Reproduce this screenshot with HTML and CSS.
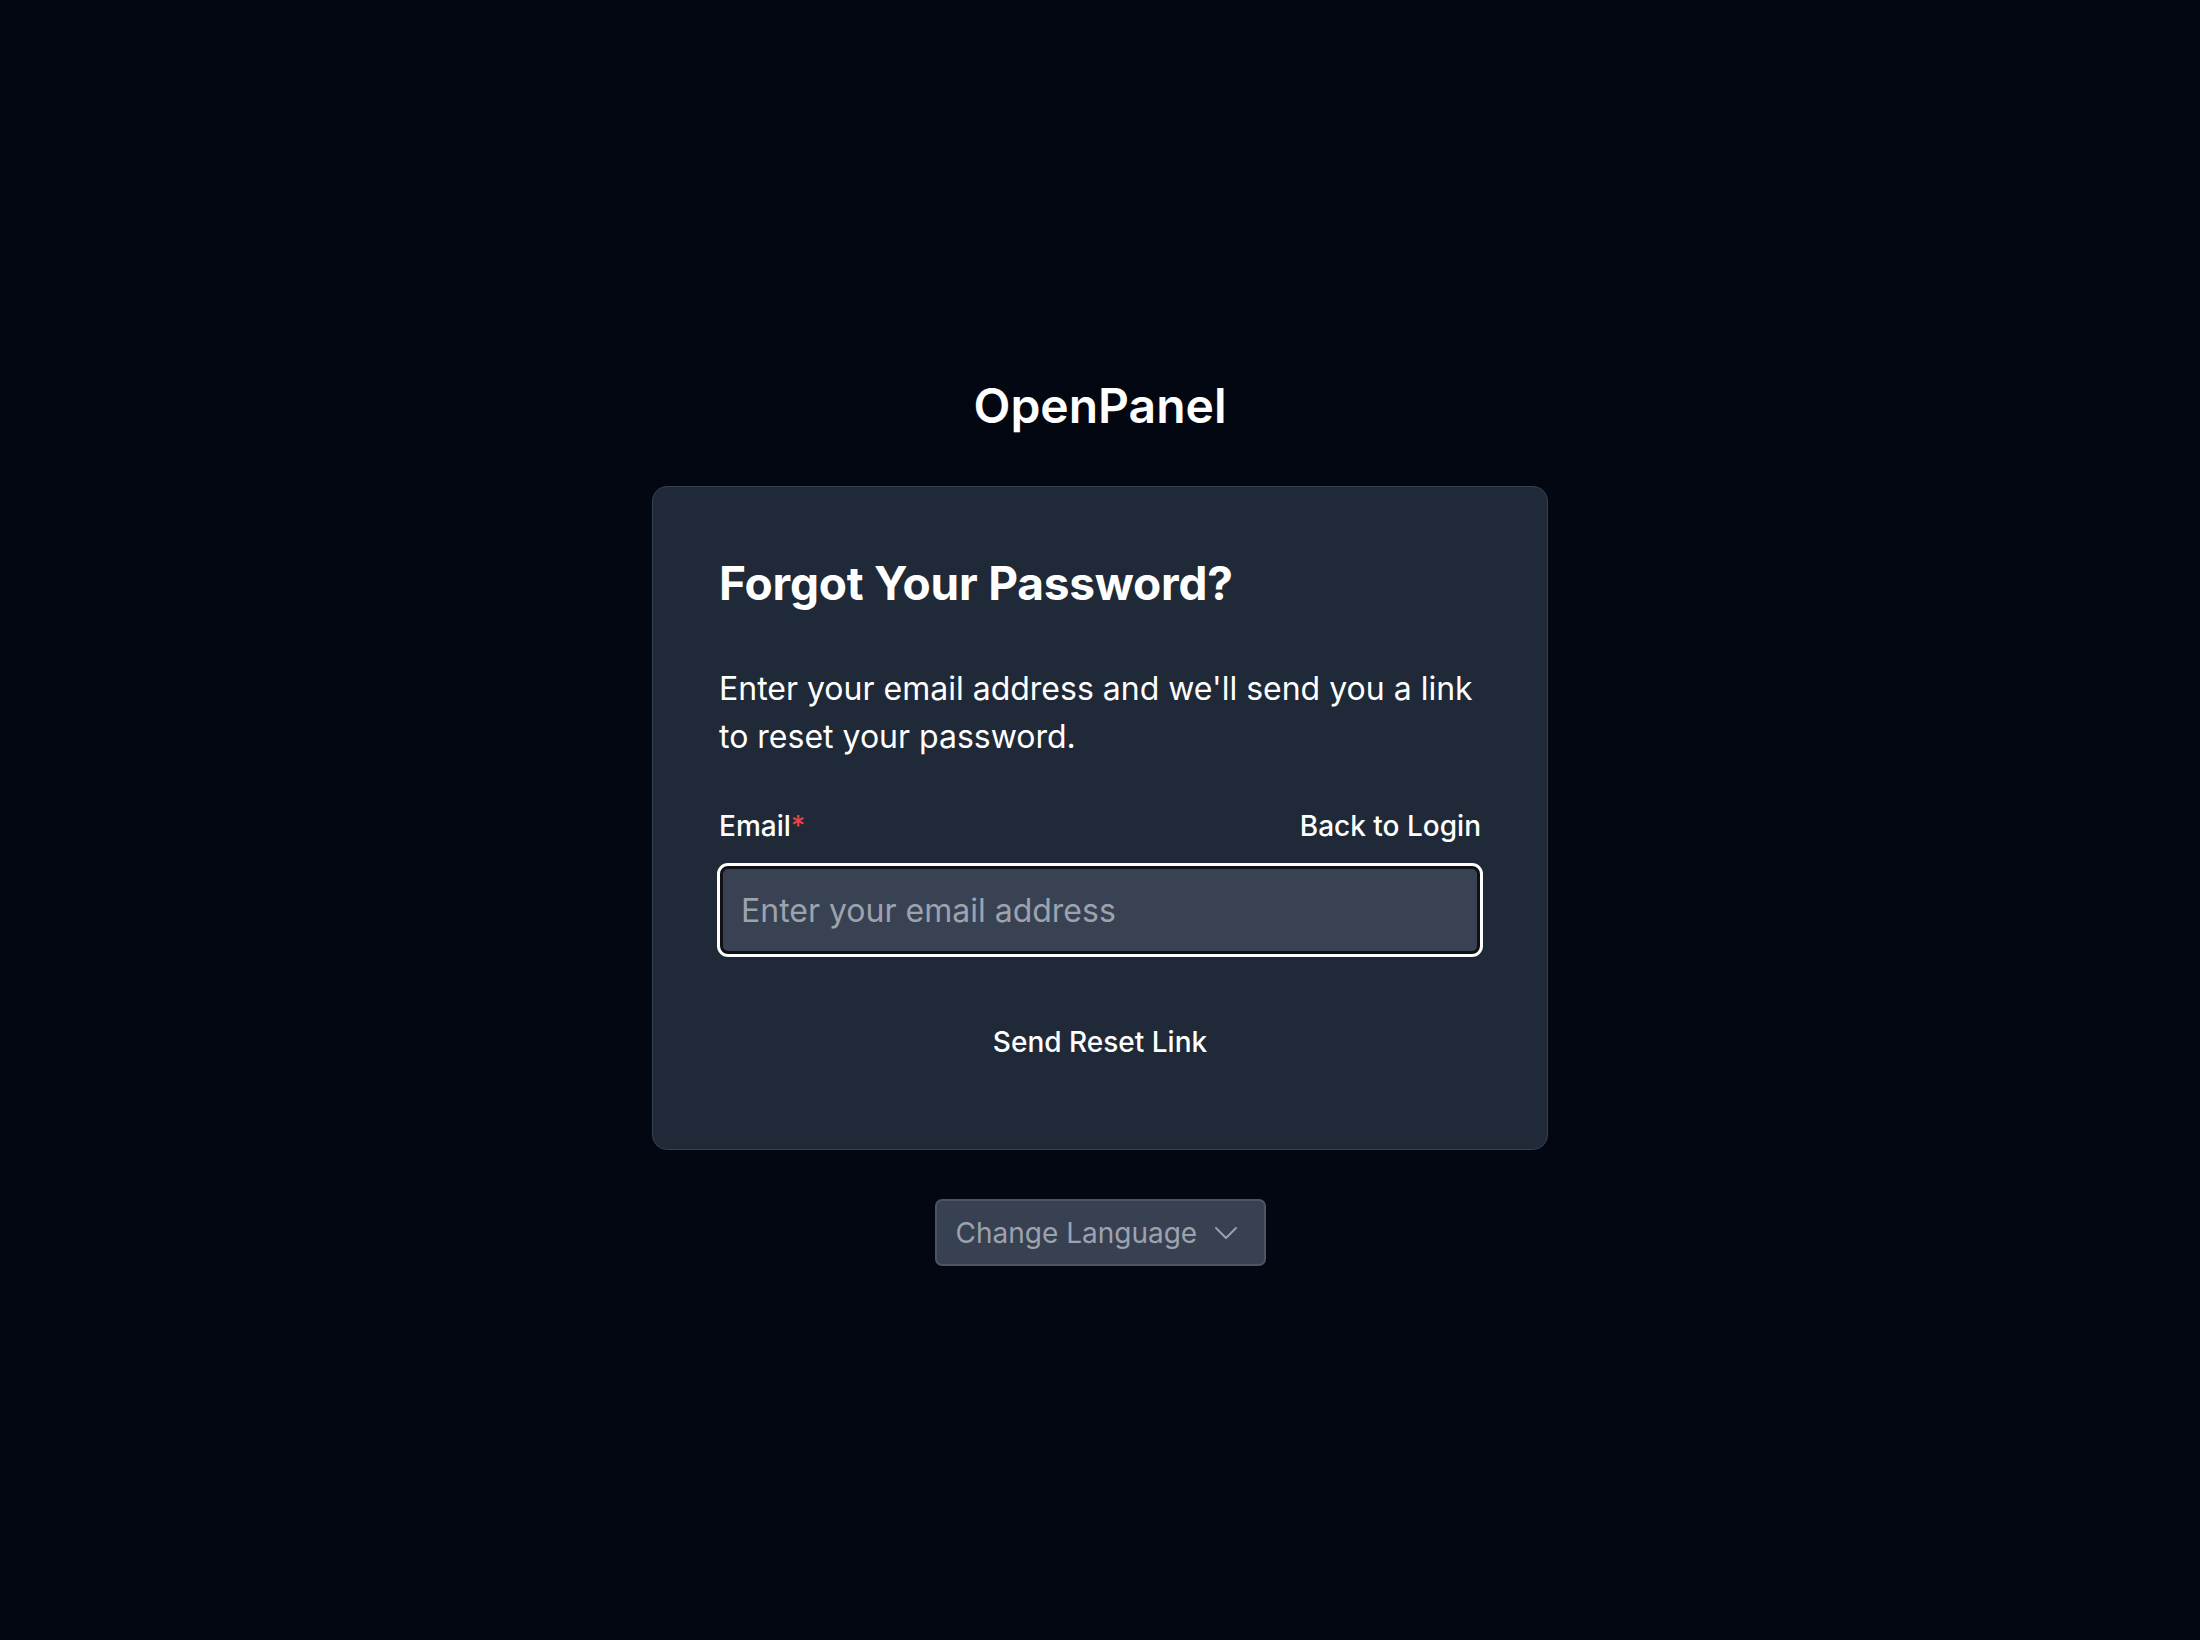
FILE: index.html
```html
<!DOCTYPE html>
<html lang="en">
<head>
<meta charset="utf-8">
<title>OpenPanel - Forgot Your Password?</title>
<link rel="stylesheet" href="styles.css">
</head>
<body>
<main class="page">
  <h1 class="brand">OpenPanel</h1>
  <section class="card">
    <h2 class="title">Forgot Your Password?</h2>
    <p class="desc">Enter your email address and we'll send you a link to reset your password.</p>
    <form class="form">
      <div class="label-row">
        <label class="label" for="email">Email<span class="req">*</span></label>
        <a class="back" href="#">Back to Login</a>
      </div>
      <input class="input" id="email" type="email" placeholder="Enter your email address">
      <button class="submit" type="button">Send Reset Link</button>
    </form>
  </section>
  <button class="lang" type="button">
    <span class="lang-text">Change Language</span>
    <svg class="chev" viewBox="0 0 22 12" width="22" height="12" aria-hidden="true"><path d="M1 1 L11 11 L21 1" fill="none" stroke="#9ca3af" stroke-width="1.8" stroke-linecap="round" stroke-linejoin="round"/></svg>
  </button>
</main>
</body>
</html>
```

FILE: styles.css
```css
html, body {
  margin: 0;
  padding: 0;
  background: #030712;
}

body {
  font-family: Inter, "Noto Sans", "DejaVu Sans", sans-serif;
  color: #ffffff;
}

.page {
  min-height: 100vh;
  box-sizing: border-box;
  display: flex;
  flex-direction: column;
  align-items: center;
  padding-top: 377px;
}

.brand {
  margin: 0;
  font-size: 48px;
  line-height: 58px;
  font-weight: 600;
  color: #ffffff;
}

.card {
  margin-top: 51px;
  width: 896px;
  box-sizing: border-box;
  background: #1f2937;
  border: 1px solid #374151;
  border-radius: 15px;
  padding: 69px 66px 67px;
}

.title {
  margin: 0;
  font-size: 46px;
  line-height: 54px;
  font-weight: 700;
  letter-spacing: -0.2px;
}

.desc {
  margin: 55px 0 0;
  font-size: 32px;
  line-height: 48px;
  font-weight: 400;
}

.form {
  display: flex;
  flex-direction: column;
}

.label-row {
  margin-top: 45px;
  display: flex;
  justify-content: space-between;
  align-items: center;
  font-size: 28px;
  line-height: 40px;
  font-weight: 500;
}

.label {
  color: #ffffff;
}

.req {
  color: #ef4444;
}

.back {
  color: #ffffff;
  text-decoration: none;
}

.input {
  margin: 20px 1px 0;
  height: 88px;
  box-sizing: border-box;
  border: 3px solid #0f1115;
  border-radius: 8px;
  box-shadow: 0 0 0 3px #ffffff;
  background: #384252;
  padding: 0 18px;
  font-family: inherit;
  font-size: 32px;
  color: #ffffff;
  outline: none;
}

.input::placeholder {
  color: #9ca3af;
}

.submit {
  margin-top: 48px;
  padding: 20px 0;
  background: transparent;
  border: none;
  font-family: inherit;
  font-size: 28px;
  line-height: 40px;
  font-weight: 500;
  color: #ffffff;
  cursor: pointer;
}

.lang {
  margin-top: 49px;
  width: 331px;
  height: 67px;
  box-sizing: border-box;
  display: flex;
  align-items: center;
  justify-content: space-between;
  padding: 0 27px 0 19px;
  background: #374151;
  border: 2px solid #4b5563;
  border-radius: 7px;
  font-family: inherit;
  font-size: 28px;
  line-height: 40px;
  color: #9ca3af;
}

.chev {
  display: block;
}
```
